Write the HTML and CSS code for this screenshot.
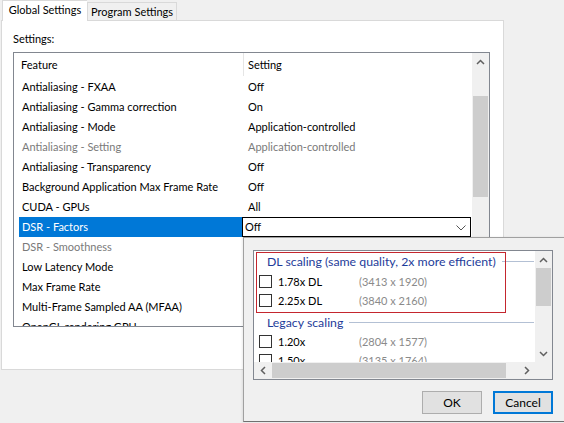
FILE: index.html
```html
<!DOCTYPE html>
<html>
<head>
<meta charset="utf-8">
<link rel="stylesheet" href="styles.css">
</head>
<body>
<div class="tabs">
  <div class="tab active">Global Settings</div>
  <div class="tab">Program Settings</div>
</div>
<div class="panel">
  <div class="label">Settings:</div>
  <div class="listbox">
    <div class="lv">
      <div class="lv-header">
        <div class="h1">Feature</div>
        <div class="h2">Setting</div>
      </div>
      <div class="row"><span class="c1">Antialiasing - FXAA</span><span class="c2">Off</span></div>
      <div class="row"><span class="c1">Antialiasing - Gamma correction</span><span class="c2">On</span></div>
      <div class="row"><span class="c1">Antialiasing - Mode</span><span class="c2">Application-controlled</span></div>
      <div class="row disabled"><span class="c1">Antialiasing - Setting</span><span class="c2">Application-controlled</span></div>
      <div class="row"><span class="c1">Antialiasing - Transparency</span><span class="c2">Off</span></div>
      <div class="row"><span class="c1">Background Application Max Frame Rate</span><span class="c2">Off</span></div>
      <div class="row"><span class="c1">CUDA - GPUs</span><span class="c2">All</span></div>
      <div class="row selected">
        <span class="c1">DSR - Factors</span>
        <div class="combo"><span>Off</span>
          <svg class="combo-arrow" width="10" height="6" viewBox="0 0 10 6"><path d="M0.5 0.5 L5 5 L9.5 0.5" fill="none" stroke="#555" stroke-width="1"/></svg>
        </div>
      </div>
      <div class="row disabled"><span class="c1">DSR - Smoothness</span><span class="c2">33%</span></div>
      <div class="row"><span class="c1">Low Latency Mode</span><span class="c2">Off</span></div>
      <div class="row"><span class="c1">Max Frame Rate</span><span class="c2">Off</span></div>
      <div class="row"><span class="c1">Multi-Frame Sampled AA (MFAA)</span><span class="c2">Off</span></div>
      <div class="row"><span class="c1">OpenGL rendering GPU</span><span class="c2">Auto-select</span></div>
    </div>
    <div class="vscroll main-v">
      <div class="sbtn"><svg width="9" height="6" viewBox="0 0 9 6"><path d="M1 5 L4.5 1.5 L8 5" fill="none" stroke="#606060" stroke-width="1.5"/></svg></div>
      <div class="thumb main-thumb"></div>
    </div>
  </div>
</div>

<div class="popup">
  <div class="inner">
    <div class="plist">
      <div class="group"><span class="gtext">DL scaling (same quality, 2x more efficient)</span><span class="gline"></span></div>
      <div class="item"><span class="cb"></span><span class="iname">1.78x DL</span><span class="ires">(3413 x 1920)</span></div>
      <div class="item"><span class="cb"></span><span class="iname">2.25x DL</span><span class="ires">(3840 x 2160)</span></div>
      <div class="group legacy"><span class="gtext">Legacy scaling</span><span class="gline"></span></div>
      <div class="item"><span class="cb"></span><span class="iname">1.20x</span><span class="ires">(2804 x 1577)</span></div>
      <div class="item"><span class="cb"></span><span class="iname">1.50x</span><span class="ires">(3135 x 1764)</span></div>
    </div>
    <div class="vscroll pop-v">
      <div class="sbtn"><svg width="9" height="6" viewBox="0 0 9 6"><path d="M1 5 L4.5 1.5 L8 5" fill="none" stroke="#606060" stroke-width="1.5"/></svg></div>
      <div class="thumb pop-thumb"></div>
      <div class="vspace"></div>
      <div class="sbtn"><svg width="9" height="6" viewBox="0 0 9 6"><path d="M1 1 L4.5 4.5 L8 1" fill="none" stroke="#606060" stroke-width="1.5"/></svg></div>
    </div>
    <div class="hscroll">
      <div class="sbtn"><svg width="6" height="9" viewBox="0 0 6 9"><path d="M5 1 L1.5 4.5 L5 8" fill="none" stroke="#606060" stroke-width="1.5"/></svg></div>
      <div class="hthumb"></div>
      <div class="hspace"></div>
      <div class="sbtn"><svg width="6" height="9" viewBox="0 0 6 9"><path d="M1 1 L4.5 4.5 L1 8" fill="none" stroke="#606060" stroke-width="1.5"/></svg></div>
    </div>
    <div class="corner"></div>
  </div>
  <div class="buttons">
    <div class="btn">OK</div>
    <div class="btn default">Cancel</div>
  </div>
  <div class="highlight"></div>
</div>
</body>
</html>
```

FILE: styles.css
```css
* { box-sizing: border-box; }

body {
  margin: 0;
  width: 564px;
  height: 423px;
  overflow: hidden;
  position: relative;
  background: #f0f0f0;
  font-family: Lato, "Liberation Sans", sans-serif;
  font-size: 11px;
  color: #000;
}

.tabs {
  display: flex;
  align-items: flex-end;
  height: 20px;
  padding-left: 2px;
  position: relative;
  z-index: 1;
}

.tab {
  height: 18px;
  width: 90px;
  line-height: 17px;
  text-align: center;
  border: 1px solid #d9d9d9;
  border-bottom: none;
  background: #f0f0f0;
  white-space: nowrap;
}

.tab.active {
  width: 85px;
  height: 21px;
  margin-bottom: -1px;
  line-height: 18px;
  background: #fff;
  border-right: none;
}

.panel {
  margin-left: 1px;
  width: 503px;
  height: 350px;
  border: 1px solid #d9d9d9;
  background: #fff;
  padding: 10px 0 0 11px;
}

.label {
  height: 16px;
  line-height: 16px;
}

.listbox {
  margin-top: 5px;
  width: 477px;
  height: 275px;
  border: 1px solid #828790;
  display: flex;
}

.lv {
  flex: 1;
  overflow: hidden;
}

.lv-header {
  display: grid;
  grid-template-columns: 229px 1fr;
  height: 24px;
  line-height: 24px;
}

.h1 { padding-left: 7px; }
.h2 {
  padding-left: 4px;
  border-left: 1px solid #e5e5e5;
  height: 23px;
}

.row {
  display: grid;
  grid-template-columns: 229px 1fr;
  height: 20px;
  line-height: 20px;
  white-space: nowrap;
}

.c1 { padding-left: 8px; overflow: hidden; }
.c2 { padding-left: 5px; }

.row.disabled { color: #7a7a7a; }

.row.selected {
  display: flex;
}

.row.selected .c1 {
  margin-left: 5px;
  width: 223px;
  padding-left: 3px;
  background: #0078d7;
  color: #fff;
}

.combo {
  width: 229px;
  height: 20px;
  border: 1px solid #000;
  display: flex;
  align-items: center;
  justify-content: space-between;
  padding: 0 4px 0 2px;
  line-height: 18px;
  background: #fff;
}

.combo-arrow { margin-top: 1px; }

.vscroll {
  width: 17px;
  background: #f0f0f0;
  display: flex;
  flex-direction: column;
  align-items: center;
}

.sbtn {
  width: 17px;
  height: 17px;
  flex: none;
  display: flex;
  align-items: center;
  justify-content: center;
}

.thumb {
  width: 15px;
  background: #cdcdcd;
  flex: none;
}

.main-thumb {
  margin-top: 26px;
  height: 101px;
}

.popup {
  position: absolute;
  left: 243px;
  top: 237px;
  width: 330px;
  height: 185px;
  border: 1px solid #a0a0a0;
  border-bottom-color: #707070;
  background: #f0f0f0;
  padding: 12px 0 0 9px;
  box-shadow: -1px 0 2px rgba(0,0,0,0.08);
}

.inner {
  width: 300px;
  height: 130px;
  border: 1px solid #828790;
  background: #fff;
  display: grid;
  grid-template-columns: 281px 17px;
  grid-template-rows: 111px 17px;
}

.plist {
  overflow: hidden;
  white-space: nowrap;
}

.group {
  display: flex;
  align-items: center;
  height: 21px;
  padding-left: 13px;
  padding-right: 1px;
  color: #1e3c9a;
  font-size: 12.3px;
}

.group.legacy {
  height: 22px;
  padding-top: 2px;
}

.gline {
  flex: 1;
  height: 1px;
  margin-left: 6px;
  background: #b3c0d4;
}

.item {
  display: flex;
  align-items: center;
  height: 19px;
  padding-left: 5px;
}

.cb {
  width: 13px;
  height: 13px;
  border: 1px solid #333;
  background: #fff;
  flex: none;
}

.iname {
  margin-left: 6px;
  width: 81px;
}

.ires { color: #8a8a8a; }

.pop-thumb {
  height: 38px;
}

.vspace { flex: 1; }

.hscroll {
  display: flex;
  align-items: center;
  background: #f0f0f0;
}

.hthumb {
  width: 234px;
  height: 15px;
  margin-left: 1px;
  background: #cdcdcd;
  flex: none;
}

.hspace { flex: 1; }

.corner { background: #f0f0f0; }

.buttons {
  width: 300px;
  margin-top: 11px;
  display: flex;
  justify-content: flex-end;
  gap: 11px;
  font-size: 12px;
}

.btn {
  width: 60px;
  height: 23px;
  line-height: 21px;
  text-align: center;
  background: #e1e1e1;
  border: 1px solid #adadad;
}

.btn.default {
  border-color: #0078d7;
  box-shadow: inset 0 0 0 1px #0078d7;
}

.highlight {
  position: absolute;
  left: 12px;
  top: 14px;
  width: 250px;
  height: 61px;
  border: 1px solid #c4262e;
  pointer-events: none;
}
```
